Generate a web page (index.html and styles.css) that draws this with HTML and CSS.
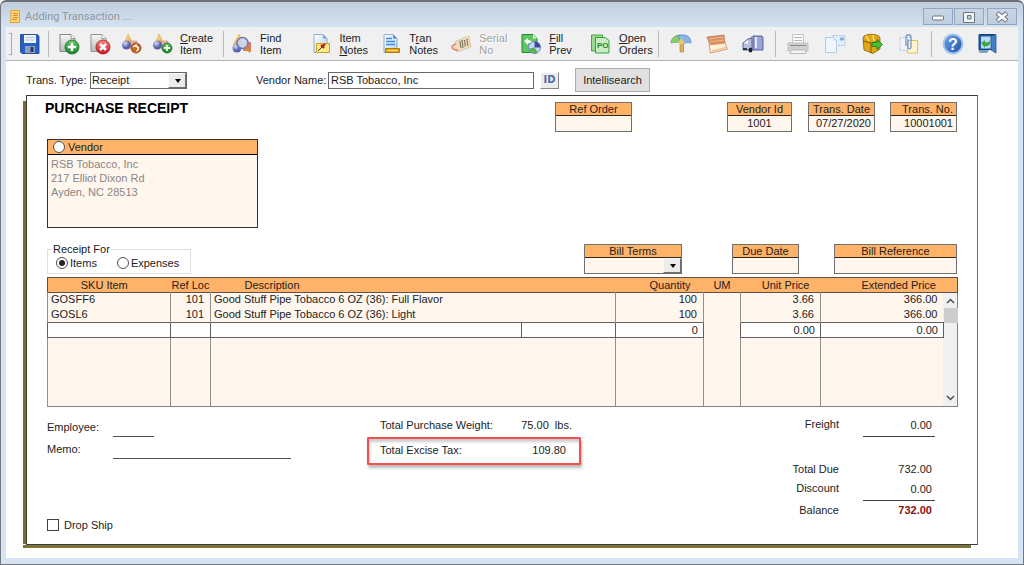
FILE: index.html
```html
<!DOCTYPE html>
<html lang="en">
<head>
<meta charset="utf-8">
<title>Adding Transaction ...</title>
<link rel="stylesheet" href="styles.css">
</head>
<body>
<svg width="0" height="0" class="defs" aria-hidden="true">
  <defs>
    <linearGradient id="blue" x1="0" y1="0" x2="1" y2="1"><stop offset="0" stop-color="#6fa8ea"/><stop offset="1" stop-color="#1c4fa8"/></linearGradient>
    <linearGradient id="green" x1="0" y1="0" x2="0" y2="1"><stop offset="0" stop-color="#6cc46a"/><stop offset="1" stop-color="#157f22"/></linearGradient>
    <linearGradient id="red" x1="0" y1="0" x2="0" y2="1"><stop offset="0" stop-color="#f58a80"/><stop offset="1" stop-color="#c8141c"/></linearGradient>
    <linearGradient id="gold" x1="0" y1="0" x2="1" y2="1"><stop offset="0" stop-color="#fff0a8"/><stop offset="1" stop-color="#e89828"/></linearGradient>
    <linearGradient id="page" x1="0" y1="0" x2="1" y2="1"><stop offset="0" stop-color="#ffffff"/><stop offset="1" stop-color="#b4d2f2"/></linearGradient>
    <linearGradient id="gray" x1="0" y1="0" x2="0" y2="1"><stop offset="0" stop-color="#f8f8f8"/><stop offset="1" stop-color="#b8bcb8"/></linearGradient>
    <radialGradient id="ball" cx=".35" cy=".3"><stop offset="0" stop-color="#d8dcf8"/><stop offset="1" stop-color="#5860a8"/></radialGradient>
    <g id="shapes">
      <path d="M8 1 13 11H4z" fill="url(#gold)" stroke="#e0a848" stroke-width=".6"/>
      <path d="M10 8h7v7h-7z" fill="#e8b0a0" stroke="#c88870" stroke-width=".5"/>
      <circle cx="6.500" cy="12" r="4.500" fill="url(#ball)"/>
    </g>
  </defs>
</svg>
<div class="window">
  <header class="titlebar">
    <svg class="app-icon" viewBox="0 0 12 14"><path d="M2 .5h8.500v12H1l1-3z" fill="#ffd77a" stroke="#f0a020"/><path d="M4 3.500h5M4 5.500h5M4 7.500h5M3 9.500h5" stroke="#d08010" stroke-width=".8"/></svg>
    <h1>Adding Transaction ...</h1>
    <div class="controls">
      <button aria-label="Minimize"><svg viewBox="0 0 14 14"><rect x="1.500" y="6" width="11" height="4" rx="1" fill="#fff" stroke="#6c7480"/></svg></button>
      <button aria-label="Maximize"><svg viewBox="0 0 14 14"><path fill-rule="evenodd" d="M1.500 2.500h11v10h-11zM5.500 5.500v3.500h3.500V5.500z" fill="#f2f5f8" stroke="#6c7480"/></svg></button>
      <button class="close" aria-label="Close"><svg viewBox="0 0 14 14"><path d="M2 3l10 8M12 3l-10 8" stroke="#6c7480" stroke-width="4.600"/><path d="M2.600 3.500l8.800 7M11.400 3.500l-8.800 7" stroke="#fff" stroke-width="2.600"/></svg></button>
    </div>
  </header>

  <div class="client">
    <nav class="toolbar" aria-label="Toolbar">
      <span class="grip"></span>
      <button class="tool save" aria-label="Save"><svg viewBox="0 0 22 22"><path d="M1.500 1.500h17l1.500 2v17H3l-1.500-1.500z" fill="#2560c8" stroke="#1a3f90" stroke-width=".8"/><path d="M5 2h12v8H5z" fill="#eef4fc"/><path d="M6.500 4.500h9M6.500 7h9" stroke="#b4c4da"/><path d="M6 13h10v7H6z" fill="#8ea0b8"/><path d="M11.500 14h3v5h-3z" fill="#203c78"/></svg></button>
      <span class="sep"></span>
      <div class="group tight">
        <button class="tool" aria-label="Add"><svg viewBox="0 0 22 22"><path d="M2 1.500h11l4 4v13H2z" fill="url(#gray)" stroke="#808880"/><path d="M13 1.500v4h4" fill="#fff" stroke="#909890"/><circle cx="14" cy="14" r="7" fill="url(#green)" stroke="#0f6c1c" stroke-width=".8"/><path d="M14 9.800v8.400M9.800 14h8.400" stroke="#fff" stroke-width="2.600"/></svg></button>
        <button class="tool" aria-label="Delete"><svg viewBox="0 0 22 22"><path d="M2 1.500h11l4 4v13H2z" fill="url(#gray)" stroke="#909090"/><path d="M13 1.500v4h4" fill="#fff" stroke="#a0a0a0"/><circle cx="14" cy="14" r="7" fill="url(#red)" stroke="#a81018" stroke-width=".8"/><path d="M11 11l6 6M17 11l-6 6" stroke="#fff" stroke-width="2.600"/></svg></button>
        <button class="tool" aria-label="Undo item"><svg viewBox="0 0 22 22"><use href="#shapes"/><circle cx="16" cy="15" r="5" fill="#c86820" stroke="#984010" stroke-width=".8"/><path d="M13 14l3-2v1.500c3 0 3 3 .5 4.500" fill="none" stroke="#fff" stroke-width="1.500"/></svg></button>
        <button class="tool" aria-label="Create Item"><svg viewBox="0 0 22 22"><use href="#shapes"/><circle cx="16" cy="15" r="5" fill="url(#green)" stroke="#0f6c1c" stroke-width=".8"/><path d="M16 12v6M13 15h6" stroke="#fff" stroke-width="1.800"/></svg><span><u>C</u>reate<br>Item</span></button>
      </div>
      <span class="sep"></span>
      <div class="group labelled">
        <button class="tool find"><svg viewBox="0 0 22 22"><path d="M8 1 13 12H2z" fill="url(#gold)" stroke="#e0a848" stroke-width=".6"/><path d="M14 9h6v9h-8z" fill="#d87868"/><circle cx="6" cy="15" r="4.500" fill="url(#ball)"/><circle cx="11.500" cy="10" r="5.500" fill="#c8d8f4" fill-opacity=".85" stroke="#7078a8" stroke-width="1.500"/><path d="M15 14l4.500 5" stroke="#c89028" stroke-width="2.600"/></svg><span>Find<br>Item</span></button>
        <button class="tool"><svg viewBox="0 0 22 22"><path d="M4 1.500h9l4 4v14H4z" fill="url(#page)" stroke="#7c9cc4" stroke-width=".8"/><path d="M13 1.500v4h4" fill="#6c9ce0"/><path d="M6.500 10.500h13v9h-13z" fill="#ffe88a" stroke="#c8a020"/><path d="M8 18l4-4" stroke="#404040"/><path d="M11 12l3 3M12 14l3-3" stroke="#b02018" stroke-width="2.200"/></svg><span>Item<br><u>N</u>otes</span></button>
        <button class="tool"><svg viewBox="0 0 22 22"><path d="M4 1.500h9l4 4v14H4z" fill="url(#page)" stroke="#7c9cc4" stroke-width=".8"/><path d="M13 1.500v4h4" fill="#4c88dc"/><path d="M6 5.500h6M6 8.500h9M6 11.500h9" stroke="#4088dc" stroke-width="1.400"/><path d="M5.500 15.500h14v4h-14z" fill="#e8a820" stroke="#b07808"/><path d="M8 17.500h9" stroke="#ffe070"/></svg><span>T<u>r</u>an<br>Notes</span></button>
        <button class="tool" disabled><svg viewBox="0 0 22 22"><path d="M6 8l13-5 2 11-14 5-4-4z" fill="#f0dcb8" stroke="#b8a488" stroke-width=".7" stroke-dasharray="1 .6"/><path d="M10 8l1 7M12 7l1 8M14.500 7l.8 6.500M17 6l.8 7" stroke="#686058" stroke-width="1.300" stroke-dasharray="1.500 .6"/><path d="M6 11c-7 2-4 6 2 6" fill="none" stroke="#e07878" stroke-width="1.300"/></svg><span>Serial<br>No</span></button>
        <button class="tool"><svg viewBox="0 0 22 22"><path d="M2 1.500h11l4 4v14H2z" fill="#60c460" stroke="#208830"/><path d="M13 1.500v4h4" fill="#e0f4d0"/><path d="M4 8l4-3v2c4 0 5 3 4 6-1-3-2-3-4-3v2z" fill="#fff"/><circle cx="14.500" cy="14.500" r="6" fill="#c8d8f0" stroke="#7084c0"/><path d="M14.500 8.500v6h6a6 6 0 0 0-6-6z" fill="#4048a8"/><path d="M9 15.500 14.500 14.500l3.500 5a6 6 0 0 1-9-4z" fill="#58b060"/></svg><span><u>F</u>ill<br>Prev</span></button>
        <button class="tool"><svg viewBox="0 0 22 22"><path d="M1.500 2h11v16h-11z" fill="#9cd890" stroke="#48a848"/><path d="M5.500 4.500h10l3.500 3v12.500H5.500z" fill="#c8ecc0" stroke="#38a040"/><text x="7" y="15" class="po">PO</text></svg><span><u>O</u>pen<br>Orders</span></button>
      </div>
      <span class="sep"></span>
      <div class="group even">
        <button class="tool" aria-label="Distribution"><svg viewBox="0 0 22 22"><path d="M10 9h3.500v10h-3.500z" fill="#e0b060" stroke="#b08030" stroke-width=".6"/><path d="M1 10c0-5 4-8 9-8 3 0 3 4 1 8-3-1-6-1-10 0z" fill="#88cc70" stroke="#50984c" stroke-width=".6"/><path d="M8 3c7-3 13 0 13 7-3-1-6 0-9 1z" fill="#88b4ec" stroke="#4078c0" stroke-width=".6"/><path d="M8 10l3.500-5 3.500 5-3.500 1.500z" fill="#f0c868"/></svg></button>
        <button class="tool" aria-label="Open box"><svg viewBox="0 0 22 22"><path d="M1 4l17-2 1 8-15 2z" fill="#d89060" stroke="#a86840" stroke-width=".6"/><path d="M2.500 6l15-2M3.500 9l15-2" stroke="#f0b890"/><path d="M3 12l16-2 2.500 6-17 4z" fill="#fff0d8" stroke="#e0986c"/><path d="M6 18l14-3.500" stroke="#e8b088"/></svg></button>
        <button class="tool" aria-label="Shipping"><svg viewBox="0 0 22 22"><path d="M9 4l4-1v13l-4 1z" fill="#f4f6ff" stroke="#6870a0" stroke-width=".6"/><path d="M11 3h9l1 2v12H11z" fill="#9ca4dc" stroke="#404880" stroke-width=".8"/><path d="M13 4h2v11h-2z" fill="#e4e8ff"/><path d="M1 10l5-4 4-1v12H1z" fill="#b8c0e0" stroke="#404878" stroke-width=".8"/><path d="M2 10l4-3v4z" fill="#fff"/><ellipse cx="8.500" cy="17" rx="2" ry="2.500" fill="#182030"/><path d="M1 15h4v2H1z" fill="#303850"/></svg></button>
      </div>
      <span class="sep"></span>
      <div class="group">
        <button class="tool" aria-label="Print" disabled><svg viewBox="0 0 22 22"><path d="M5.500 1.500h11v9h-11z" fill="#fafafa" stroke="#c4c4c4"/><path d="M7 4.500h8M7 7.500h8" stroke="#b8b8b8"/><path d="M1 10h20v8H1z" fill="#d0d0d0" stroke="#c0c0c0"/><path d="M3 12.500h16" stroke="#888"/><path d="M4 17h14l1 3.500H3z" fill="#f4f4f4" stroke="#bcbcbc"/></svg></button>
        <button class="tool" aria-label="Copy" disabled><svg viewBox="0 0 22 22"><path d="M9 2.500h12v10H9z" fill="#e4eef8" stroke="#a8c4e4" stroke-dasharray="2 1"/><path d="M16 4.500h4v3h-4z" fill="#88b0e0"/><path d="M1.500 4.500h8l3 3v12h-11z" fill="#eef5fc" stroke="#b0cce8"/><path d="M9.500 4.500v3h3" fill="#c8def4"/></svg></button>
        <button class="tool" aria-label="Post"><svg viewBox="0 0 22 22"><path d="M2 5c0-5 16-5 17 0v11l-7 4.500L3 17z" fill="#e0a818" stroke="#8c6008" stroke-width=".8"/><path d="M2 8l8 2 9-2M10 10v10" fill="none" stroke="#8c6008" stroke-width="1.200"/><path d="M5 3l3 5M12 2l1 6" stroke="#ffe470" stroke-width="1.400"/><path d="M11 9.500h5v-3l5.500 5-5.500 5v-3h-5z" fill="#48c030" stroke="#187818" stroke-width=".8"/></svg></button>
        <button class="tool" aria-label="Attach" disabled><svg viewBox="0 0 22 22"><path d="M2 4.500h11v13H2z" fill="#f0f4fa" stroke="#b8c8dc" stroke-dasharray="2 1"/><path d="M9.500 7.500h10v12.500h-10z" fill="#fff4cc" stroke="#dcc070"/><path d="M8 13V4c0-3 5-3 5 0v10c0 2.500-3 2.500-3 0V6" fill="none" stroke="#7898c8" stroke-width="1.300"/></svg></button>
      </div>
      <span class="sep"></span>
      <div class="group last">
        <button class="tool" aria-label="Help"><svg viewBox="0 0 22 22"><circle cx="11" cy="11" r="9.500" fill="url(#blue)" stroke="#a8c4ec" stroke-width="2"/><text x="11" y="16.500" text-anchor="middle" class="help">?</text></svg></button>
        <button class="tool" aria-label="Exit"><svg viewBox="0 0 22 22"><path d="M3 1.500h16v15H3z" fill="#1c58a8" stroke="#184080"/><path d="M5 3.500h10v12H5z" fill="#b8dcf8"/><path d="M15 3l5-1.500V20l-5-3z" fill="#4080c8" stroke="#204880" stroke-width=".7"/><path d="M5 10l4-3v2c3 1 4 0 5-2 1 5-2 7-5 6v2z" fill="#40a848"/><path d="M2 17h11l-2 3H4z" fill="#80a0c8"/></svg></button>
      </div>
    </nav>

    <form class="content">
      <div class="lookup">
        <label class="type-label" for="type">Trans. Type:</label>
        <span class="combo type"><select id="type"><option>Receipt</option></select></span>
        <label class="vendor-label" for="vname">Vendor Name:</label>
        <input class="vendor-name" id="vname" value="RSB Tobacco, Inc">
        <button type="button" class="id-btn">ID</button>
        <button type="button" class="search-btn">Intellisearch</button>
      </div>

      <main class="paper">
        <div class="paper-head">
          <h2>PURCHASE RECEIPT</h2>
          <div class="field ref"><label for="ref">Ref Order</label><input id="ref"></div>
          <div class="field vid"><label for="vid">Vendor Id</label><input id="vid" value="1001"></div>
          <div class="field date"><label for="date">Trans. Date</label><input id="date" value="07/27/2020"></div>
          <div class="field no"><label for="no">Trans. No.</label><input id="no" value="10001001"></div>
        </div>

        <section class="vendor">
          <label><input type="radio" name="party">Vendor</label>
          <address>RSB Tobacco, Inc<br>217 Elliot Dixon Rd<br>Ayden, NC 28513</address>
        </section>

        <div class="bill-row">
          <fieldset>
            <legend>Receipt For</legend>
            <label><input type="radio" name="for" checked>Items</label>
            <label><input type="radio" name="for">Expenses</label>
          </fieldset>
          <div class="field terms"><label for="terms">Bill Terms</label><span class="combo"><select id="terms"><option></option></select></span></div>
          <div class="field due"><label for="due">Due Date</label><input id="due"></div>
          <div class="field bill"><label for="bill">Bill Reference</label><input id="bill"></div>
        </div>

        <table>
          <colgroup><col class="c-sku"><col class="c-loc"><col><col class="c-ext"><col class="c-qty"><col class="c-um"><col class="c-unit"><col class="c-price"><col class="c-bar"></colgroup>
          <thead>
            <tr><th class="h-sku">SKU Item</th><th>Ref Loc</th><th class="h-desc" colspan="2">Description</th><th class="h-num">Quantity</th><th>UM</th><th class="h-unit">Unit Price</th><th class="h-price" colspan="2">Extended Price</th></tr>
          </thead>
          <tbody>
            <tr><td>GOSFF6</td><td class="num">101</td><td colspan="2">Good Stuff Pipe Tobacco 6 OZ (36): Full Flavor</td><td class="num">100</td><td></td><td class="num">3.66</td><td class="num">366.00</td>
              <td class="bar" rowspan="4"><div class="scrollbar"><svg viewBox="0 0 9 6"><path d="M1 5l3.500-3.500L8 5"/></svg><i></i><svg viewBox="0 0 9 6"><path d="M1 1l3.500 3.500L8 1"/></svg></div></td></tr>
            <tr><td>GOSL6</td><td class="num">101</td><td colspan="2">Good Stuff Pipe Tobacco 6 OZ (36): Light</td><td class="num">100</td><td></td><td class="num">3.66</td><td class="num">366.00</td></tr>
            <tr class="edit"><td><input aria-label="SKU Item"></td><td><input aria-label="Ref Loc"></td><td><input aria-label="Description"></td><td><input aria-label="Detail"></td><td><input aria-label="Quantity" value="0"></td><td class="um"></td><td><input aria-label="Unit Price" value="0.00"></td><td><input aria-label="Extended Price" value="0.00"></td></tr>
            <tr class="rest"><td></td><td></td><td colspan="2"></td><td></td><td></td><td></td><td></td></tr>
          </tbody>
        </table>

        <div class="summary">
          <div class="left">
            <div class="line"><label for="emp">Employee:</label><input class="emp" id="emp"></div>
            <div class="line"><label for="memo">Memo:</label><input class="memo" id="memo"></div>
            <label class="drop"><input type="checkbox">Drop Ship</label>
          </div>
          <div class="middle">
            <div class="weight"><span>Total Purchase Weight:</span><span>75.00&nbsp; lbs.</span></div>
            <div class="excise"><span>Total Excise Tax:</span><span>109.80</span></div>
          </div>
          <div class="totals">
            <label for="freight">Freight</label><input class="freight" id="freight" value="0.00">
            <span>Total Due</span><output>732.00</output>
            <label for="disc">Discount</label><input id="disc" value="0.00">
            <span>Balance</span><output class="balance">732.00</output>
          </div>
        </div>
      </main>
    </form>
  </div>
</div>
</body>
</html>
```

FILE: styles.css
```css
* { box-sizing: border-box; }

body {
  margin: 0;
  background: #fff;
  color: #222;
  font: 11px/14px "Liberation Sans", Arial, sans-serif;
}

button, input, select { font: inherit; color: inherit; margin: 0; padding: 0; border-radius: 0; }
h1, h2 { margin: 0; }
.defs { position: absolute; }

.window {
  display: flex;
  flex-direction: column;
  min-height: 100vh;
  padding: 0 5px 6px;
  border: 1px solid #74787e;
  border-top: 2px solid #6c7078;
  border-radius: 6px 6px 0 0;
  background: linear-gradient(#c0cddc, #d6e3f2 26px);
}

/* Title bar */
.titlebar { display: flex; align-items: center; height: 25px; padding: 4px 1px 0 3px; }
.app-icon { width: 12px; height: 14px; margin-right: 4px; }
h1 { flex: 1; font: 11px/16px Roboto, sans-serif; color: #8e979f; }
.controls { display: flex; gap: 1px; }
.controls button {
  display: grid;
  place-items: center;
  width: 30px;
  height: 17px;
  border: 1px solid #92a6c4;
  background: linear-gradient(#c8d5e4, #c0cfe0);
}
.controls .close { margin-left: 2px; }
.controls svg { width: 14px; height: 14px; }

.client { flex: 1; display: flex; flex-direction: column; background: #fff; }

/* Toolbar */
.toolbar {
  display: flex;
  align-items: center;
  height: 34px;
  padding: 0 10px 0 3px;
  background: #f0f0f0;
  border-bottom: 1px solid #b4b4b4;
}
.grip { width: 3px; height: 22px; border: 1px solid #a8a8a8; border-left: 0; }
.sep { flex: none; width: 1px; height: 26px; background: #b8b8b8; }
.group { display: flex; gap: 1px; padding: 0 4px; }
.tool { display: flex; align-items: center; gap: 7px; padding: 0 7px; border: 0; background: none; text-align: left; line-height: 12px; }
.tool svg { flex: none; width: 22px; height: 22px; }
.tight { padding: 0 6px 0 5px; }
.tight .tool { padding: 0 4px; }
.even { gap: 0; }
.last { gap: 0; }
.last .tool { padding: 0 6px; }
.labelled { flex: 1; gap: 0; padding: 0 2px 0 3px; }
.labelled .tool { flex: 70 1 0; padding: 0 0 0 4px; }
.labelled .find { flex-grow: 80; }
.tool:disabled span { color: #a0a0a0; text-shadow: 1px 1px #fff; }
.po { font: bold 8px "Liberation Sans", sans-serif; fill: #208830; }
.help { font: bold 16px "Liberation Sans", sans-serif; fill: #fff; }

/* Lookup row */
.content { flex: 1; display: flex; flex-direction: column; padding: 0 40px 13px 20px; }
.lookup { display: flex; align-items: center; height: 34px; padding-top: 4px; }
.type-label { width: 64px; }
.lookup input, .type { height: 17px; border: 1px solid #686868; background: #fff; }
.combo { position: relative; display: block; }
.combo select { display: block; width: 100%; height: 100%; padding: 0 1px; border: 0; outline: 0; background: transparent; appearance: none; }
.combo::before { content: ""; position: absolute; top: 0; right: 0; bottom: 0; width: 16px; background: #ececec; border: 1px solid #707070; border-top-color: #f8f8f8; border-left-color: #f8f8f8; pointer-events: none; }
.combo::after { content: ""; position: absolute; top: 6px; right: 5px; border: 3px solid transparent; border-top: 4px solid #000; border-bottom: 0; pointer-events: none; }
.type { width: 97px; }
.vendor-label { width: 72px; margin-left: 69px; }
.vendor-name { width: 206px; padding: 0 2px; }
.id-btn { width: 19px; height: 17px; margin-left: 6px; border: 1px solid #888; border-top-color: #fff; border-left-color: #fff; background: #ececec; color: #5468a8; font: bold 10px/14px "DejaVu Sans", sans-serif; }
.search-btn { width: 75px; height: 24px; margin-left: 16px; border: 1px solid #adadad; background: #e1e1e1; line-height: 12px; }

/* Receipt */
.paper {
  position: relative;
  z-index: 0;
  flex: 1;
  display: flex;
  flex-direction: column;
  padding: 6px 19px 12px 20px;
  border: 1px solid #3c3c3c;
  border-right-color: #707070;
  background: #fff;
}
.paper::before { content: ""; position: absolute; top: 5px; left: -4px; bottom: 0; width: 3px; background: #7c6c34; }
.paper::after { content: ""; position: absolute; left: -4px; right: 6px; bottom: -4px; height: 3px; background: #7c7438; }

.paper-head { display: flex; align-items: flex-start; padding-right: 1px; }
h2 { flex: 1; margin-left: -2px; font-size: 14px; line-height: 13px; color: #000; }

.field { display: flex; flex-direction: column; border: 1px solid #707070; background: #fff6ee; }
.field label { height: 13px; border-bottom: 1px solid #302820; background: #ffb368; line-height: 13px; text-align: center; white-space: nowrap; }
.field input { width: 100%; height: 15px; padding-bottom: 1px; border: 0; background: transparent; text-align: center; }
.ref { width: 77px; margin-right: 95px; }
.vid { width: 65px; margin-right: 16px; }
.date { width: 67px; margin-right: 15px; }
.no { width: 67px; }
.no label, .no input, .date input { text-align: right; padding-right: 3px; }

.vendor { width: 211px; height: 89px; margin-top: 7px; border: 1px solid #303030; background: #fff6ee; }
.vendor label { display: flex; align-items: center; height: 15px; gap: 3px; padding-left: 5px; border-bottom: 1px solid #000; background: #ffb368; }
address { padding: 2px 3px; font-style: normal; color: #8a8683; }

input[type="radio"] { appearance: none; display: grid; place-items: center; width: 12px; height: 12px; border: 1px solid #505050; border-radius: 50%; background: #fff; }
input[type="radio"]:checked::before { content: ""; width: 6px; height: 6px; border-radius: 50%; background: #282828; }

.bill-row { display: flex; align-items: flex-end; margin-top: 15px; padding-right: 1px; }
fieldset { display: flex; gap: 20px; width: 144px; height: 31px; margin: 0 auto 0 0; padding: 0 8px 4px; border: 1px solid #e0e0e0; }
legend { padding: 0 1px; margin-left: -4px; line-height: 13px; }
fieldset label { display: flex; align-items: center; gap: 2px; }
.terms { width: 98px; margin-right: 50px; }
.terms .combo { height: 15px; }
.due { width: 67px; margin-right: 35px; }
.bill { width: 123px; }

/* Line items */
table { width: 100%; margin-top: 3px; border-collapse: collapse; table-layout: fixed; border: 1px solid #808080; background: #fff6ee; }
.c-sku { width: 123px; }
.c-loc { width: 40px; }
.c-ext { width: 94px; }
.c-qty { width: 88px; }
.c-um { width: 37px; }
.c-unit { width: 80px; }
.c-price { width: 123px; }
.c-bar { width: 14px; }
thead { background: #ffb368; border: 1px solid #5c5048; }
th { height: 15px; padding: 0; font-weight: normal; line-height: 14px; white-space: nowrap; }
.h-sku { padding-right: 10px; }
.h-desc { padding-left: 34px; text-align: left; }
.h-num { padding-right: 13px; text-align: right; }
.h-unit { padding-right: 11px; text-align: right; }
.h-price { padding-right: 21px; text-align: right; }
td { height: 15px; padding: 0 3px 1px; border-left: 1px solid #909090; line-height: 13px; white-space: nowrap; }
.num { padding-right: 6px; text-align: right; }
.edit td { height: 15px; padding: 0; border: 1px solid #606060; background: #fff; }
.edit .um { background: transparent; border-top: 0; border-bottom: 0; }
.edit input { display: block; width: 100%; height: 14px; padding: 0 5px 1px; border: 0; background: transparent; text-align: right; }
.rest td { height: 68px; }
.bar { height: 100%; padding: 0; border-left: 0; background: #f0f0f0; }
.scrollbar { display: flex; flex-direction: column; align-items: center; height: 113px; padding: 5px 0; }
.scrollbar svg { width: 9px; height: 6px; fill: none; stroke: #505050; stroke-width: 1.5; }
.scrollbar i { width: 14px; height: 15px; margin: 4px 0 auto; background: #cdcdcd; }

/* Summary */
.summary { flex: 1; display: grid; grid-template-columns: 320px 214px 1fr; }
.left { display: flex; flex-direction: column; padding-top: 12px; }
.line { display: flex; align-items: flex-start; height: 22px; }
.line label { width: 66px; line-height: 16px; }
.line input { height: 18px; border: 0; border-bottom: 1px solid #505050; }
.emp { width: 41px; }
.memo { width: 178px; }
.drop { display: flex; align-items: center; gap: 5px; margin-top: auto; }
.drop input { appearance: none; width: 12px; height: 12px; border: 1px solid #404040; background: #fff; }
.weight, .excise { display: flex; justify-content: space-between; padding: 0 13px; }
.weight { margin-top: 11px; padding-right: 9px; }
.excise { height: 28px; margin-top: 5px; padding-top: 4px; border: 2px solid #f05050; border-radius: 1px; box-shadow: 1px 3px 3px #bbb, inset 1px 3px 3px #ccc; padding-left: 11px; }
.totals { display: grid; grid-template-columns: auto 72px; grid-template-rows: 45px 19px 22px 20px; column-gap: 24px; justify-content: end; align-content: start; padding: 10px 23px 0 0; text-align: right; }
.totals input { width: 72px; height: 20px; padding: 0 3px 3px 0; border: 0; border-bottom: 1px solid #404040; text-align: right; }
.totals output { padding-right: 3px; }
.balance { color: #8c1010; font-weight: bold; }
```
